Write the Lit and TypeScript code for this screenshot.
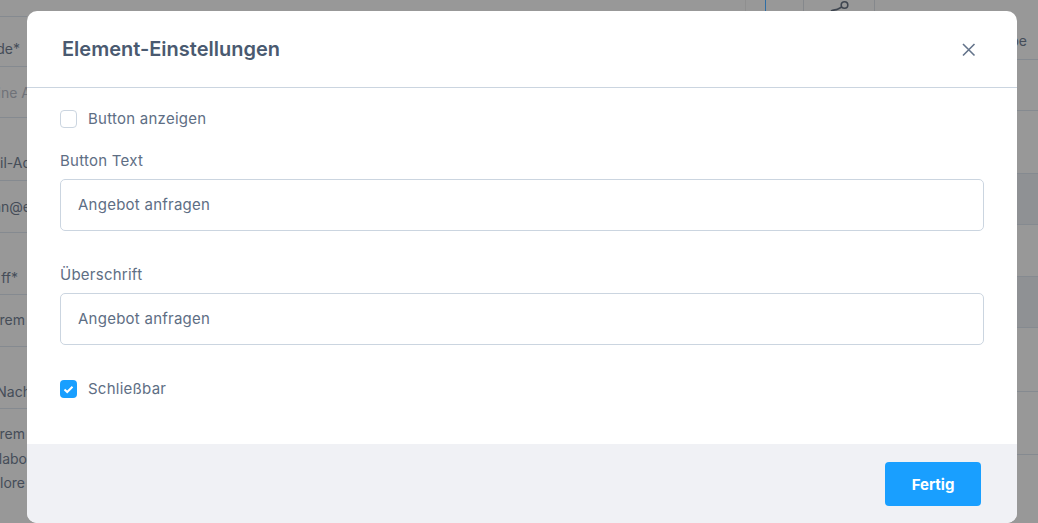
import { LitElement, html, css } from "lit";
import { customElement } from "lit/decorators.js";

@customElement("app-root")
export class AppRoot extends LitElement {
  static styles = css`
    :host { display: block; width: 1038px; height: 523px; position: relative; overflow: hidden; font-family: Inter, "Liberation Sans", sans-serif; background: #989898; }
    .back { display: flex; justify-content: space-between; height: 100%; color: #454d58; font-size: 14px; }
    .left { width: 27px; overflow: hidden; white-space: nowrap; display: flex; flex-direction: column; }
    .right { width: 21px; overflow: hidden; white-space: nowrap; display: flex; flex-direction: column; }
    .cell { box-sizing: border-box; flex: none; border-bottom: 1px solid #858a90; display: flex; align-items: center; justify-content: flex-end; }
    .over { flex: none; margin-right: -4px; }
    .tint { background: #8f9194; }
    .lines { padding-top: 13px; line-height: 24.5px; display: flex; flex-direction: column; align-items: flex-end; }
    .muted { color: #6f7278; }
    .top { position: absolute; top: 0; left: 745px; height: 11px; width: 130px; display: flex; }
    .top i { display: block; height: 11px; box-sizing: border-box; border-right: 1px solid #85888c; }
    .top svg { position: absolute; left: 84px; top: 0; }
    .modal { position: absolute; left: 27px; top: 11px; width: 990px; height: 512px; background: #fff; border-radius: 10px; display: flex; flex-direction: column; overflow: hidden; color: #5e6e84; }
    .head { box-sizing: border-box; height: 77px; flex: none; border-bottom: 1px solid #cbd5e0; display: flex; align-items: center; justify-content: space-between; padding: 0 41px 0 35px; }
    h2 { margin: 0; font-size: 20px; font-weight: 600; color: #4a5a70; line-height: 28px; }
    .close { width: 14px; height: 14px; display: block; margin-top: 2px; }
    .body { flex: 1; padding: 21px 33px 0 33px; display: flex; flex-direction: column; }
    .check { display: flex; align-items: center; gap: 11px; font-size: 15px; letter-spacing: 0.25px; line-height: 20px; }
    .box { box-sizing: border-box; width: 17px; height: 18px; border: 1px solid #cbd5e0; border-radius: 4px; background: #fff; display: block; }
    .box.on { border: 0; background: #199fff; display: flex; align-items: center; justify-content: center; }
    label { display: block; font-size: 15px; letter-spacing: 0.25px; line-height: 20px; margin-bottom: 8px; }
    .field { margin-top: 22px; }
    .second { margin-top: 34px; }
    .input { box-sizing: border-box; height: 52px; border: 1px solid #cbd5e0; border-radius: 5px; padding: 0 17px 2px; display: flex; align-items: center; font-size: 15px; letter-spacing: 0.25px; }
    .last { margin-top: 34px; }
    .foot { flex: none; height: 79px; box-sizing: border-box; background: #f0f1f5; display: flex; justify-content: flex-end; padding: 18px 36px 0 0; }
    button { width: 96px; height: 44px; border: 0; border-radius: 4px; background: #199fff; color: #fff; font: 700 15px Inter, "Liberation Sans", sans-serif; }
  `;

  render() {
    return html`
      <div class="back">
        <div class="left">
          <div class="cell" style="height:17px"></div>
          <div class="cell" style="height:50px;padding:14px 7px 0 0">de*</div>
          <div class="cell muted" style="height:51px"><span class="over">ine A</span></div>
          <div class="cell" style="height:63px;padding-top:26px"><span class="over">il-Ad</span></div>
          <div class="cell" style="height:52px"><span class="over">an@e</span></div>
          <div class="cell" style="height:62px;padding:28px 9px 0 0">ff*</div>
          <div class="cell" style="height:52px;padding:0 2px 2px 0">rem</div>
          <div class="cell" style="height:62px;padding-top:28px"><span class="over">Nach</span></div>
          <div class="lines"><div style="padding-right:2px">rem</div><div>labo</div><div style="padding-right:2px">lore</div></div>
        </div>
        <div class="right">
          <div class="cell" style="height:60px;padding:22px 11px 0 0">pe</div>
          <div class="cell" style="height:51px"></div>
          <div class="cell" style="height:63px"></div>
          <div class="cell tint" style="height:51px"></div>
          <div class="cell" style="height:52px"></div>
          <div class="cell tint" style="height:51px"></div>
          <div class="cell" style="height:64px"></div>
          <div class="cell" style="height:63px"></div>
        </div>
      </div>
      <div class="top">
        <i style="width:21px;border-right-color:#2f6ea5;border-left:1px solid #8f8f8f"></i><i style="width:38px"></i><i style="width:71px"></i>
        <svg width="24" height="11" viewBox="0 0 24 11" fill="none" stroke="#3f4650" stroke-width="1.6"><circle cx="15.5" cy="5" r="3.3"/><path d="M12.8 7L8.5 9.2C6.5 10.2 4.5 9.5 2 11"/></svg>
      </div>
      <div class="modal">
        <div class="head">
          <h2>Element-Einstellungen</h2>
          <svg class="close" viewBox="0 0 14 14" fill="none" stroke="#64748b" stroke-width="1.6"><path d="M1 1L12.5 12.5M12.5 1L1 12.5"/></svg>
        </div>
        <div class="body">
          <div class="check"><span class="box"></span><span>Button anzeigen</span></div>
          <div class="field"><label>Button Text</label><div class="input">Angebot anfragen</div></div>
          <div class="second"><label>Überschrift</label><div class="input">Angebot anfragen</div></div>
          <div class="check last"><span class="box on"><svg width="11" height="9" viewBox="0 0 11 9" fill="none" stroke="#fff" stroke-width="2"><path d="M1.5 4.5L4.2 7L9.5 1.8"/></svg></span><span>Schließbar</span></div>
        </div>
        <div class="foot"><button>Fertig</button></div>
      </div>
    `;
  }
}
